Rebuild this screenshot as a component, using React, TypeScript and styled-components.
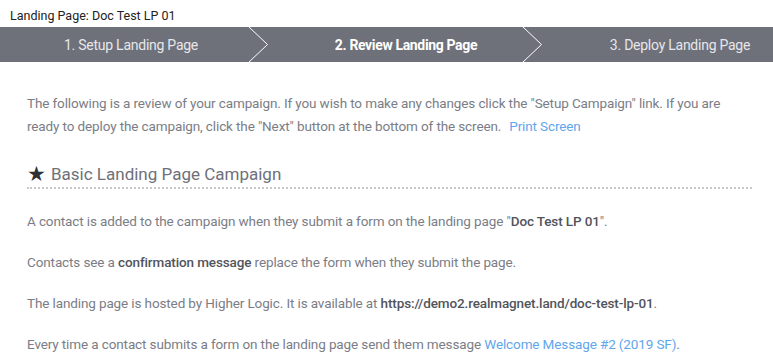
import React from 'react';
import styled, { createGlobalStyle } from 'styled-components';

const GlobalStyle = createGlobalStyle`
  body {
    margin: 0;
    background: #ffffff;
    font-family: Roboto, "Liberation Sans", sans-serif;
  }
`;

const Page = styled.div`
  width: 773px;
  overflow: hidden;
`;

const PageTitle = styled.div`
  height: 27px;
  box-sizing: border-box;
  padding: 8px 10px 0;
  font-size: 12.5px;
  line-height: 15px;
  color: #222;
`;

const StepBar = styled.div`
  display: flex;
  height: 35px;
  background: #6e707a;
  overflow: hidden;
`;

const Step = styled.div<{ $basis?: number; $padLeft: number; $active?: boolean }>`
  flex: ${(p) => (p.$basis ? `0 0 ${p.$basis}px` : '1 1 auto')};
  box-sizing: border-box;
  padding-left: ${(p) => p.$padLeft}px;
  display: flex;
  align-items: center;
  justify-content: center;
  color: ${(p) => (p.$active ? '#ffffff' : '#e6e7ea')};
  font-size: 14px;
  letter-spacing: ${(p) => (p.$active ? '-0.35px' : '-0.25px')};
  font-weight: ${(p) => (p.$active ? 700 : 400)};
  white-space: nowrap;
`;

const Chevron = styled.svg`
  flex: 0 0 19px;
  height: 35px;
  display: block;
`;

const Content = styled.div`
  padding: 30px 21px 0 27px;
  color: #7b7d86;
  font-size: 13.5px;
  letter-spacing: -0.12px;
  line-height: 23px;
`;

const Intro = styled.p`
  margin: 0;
`;

const Link = styled.a<{ $gap?: number }>`
  color: #5fa6ec;
  text-decoration: none;
  margin-left: ${(p) => p.$gap ?? 0}px;
`;

const SectionHeading = styled.h3`
  margin: 24px 0 0;
  padding-bottom: 1px;
  font-size: 17px;
  font-weight: 400;
  letter-spacing: 0;
  line-height: 24px;
  color: #6e707a;
  border-bottom: 2px dotted #c9c9cc;
  display: flex;
  align-items: center;
  gap: 5px;
`;

const Star = styled.span`
  color: #2f3036;
  font-size: 21px;
  line-height: 24px;
`;

const Detail = styled.p`
  margin: 21px 0 0;
  & + & {
    margin-top: 18px;
  }
`;

const Strong = styled.span`
  color: #52545c;
  font-weight: 500;
`;

const ChevronDivider = () => (
  <Chevron viewBox="0 0 19 35">
    <polyline points="0,0 18.5,17.5 0,35" fill="none" stroke="#ffffff" strokeWidth="1" />
  </Chevron>
);

export default function App() {
  return (
    <Page>
      <GlobalStyle />
      <PageTitle>Landing Page: Doc Test LP 01</PageTitle>
      <StepBar>
        <Step $basis={249} $padLeft={13}>1. Setup Landing Page</Step>
        <ChevronDivider />
        <Step $basis={255} $padLeft={21} $active>2. Review Landing Page</Step>
        <ChevronDivider />
        <Step $padLeft={45}>3. Deploy Landing Page</Step>
      </StepBar>
      <Content>
        <Intro>
          The following is a review of your campaign. If you wish to make any changes click the "Setup Campaign" link. If you are ready to deploy the campaign, click the "Next" button at the bottom of the screen.
          <Link href="#" $gap={8}>Print Screen</Link>
        </Intro>
        <SectionHeading>
          <Star>★</Star>
          Basic Landing Page Campaign
        </SectionHeading>
        <Detail>
          A contact is added to the campaign when they submit a form on the landing page "<Strong>Doc Test LP 01</Strong>".
        </Detail>
        <Detail>
          Contacts see a <Strong>confirmation message</Strong> replace the form when they submit the page.
        </Detail>
        <Detail>
          The landing page is hosted by Higher Logic. It is available at <Strong>https://demo2.realmagnet.land/doc-test-lp-01</Strong>.
        </Detail>
        <Detail>
          Every time a contact submits a form on the landing page send them message <Link href="#">Welcome Message #2 (2019 SF)</Link>.
        </Detail>
      </Content>
    </Page>
  );
}
